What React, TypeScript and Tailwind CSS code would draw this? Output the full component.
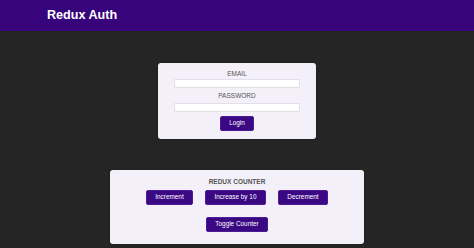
import React from "react";

const font = { fontFamily: '"Liberation Sans", Arial, sans-serif' };

const Btn: React.FC<{ children: React.ReactNode; className?: string }> = ({
  children,
  className = "",
}) => (
  <button
    className={`h-[15px] px-0 rounded-[2px] bg-[#3b0883] border border-[#4b1a94] text-white text-[6.4px] leading-none whitespace-nowrap flex items-center justify-center ${className}`}
  >
    {children}
  </button>
);

export default function App() {
  return (
    <div className="w-full h-[248px] bg-[#252525] overflow-hidden" style={font}>
      <header className="h-[31px] bg-[#37047c] flex items-center pl-[47px]">
        <h1 className="text-white font-bold text-[12.6px] leading-none">
          Redux Auth
        </h1>
      </header>

      <main className="flex flex-col items-center pt-[32px]">
        <section className="w-[158px] h-[76px] bg-[#f3f0fa] rounded-[3px] shadow-sm px-[16px] pt-[5px] flex flex-col items-center">
          <label className="h-[11px] flex items-center text-[6.5px] text-[#555]">
            EMAIL
          </label>
          <input className="w-full h-[9px] bg-white border border-[#e2deea] rounded-[1px] outline-none" />
          <label className="h-[15px] pt-[1px] flex items-center text-[6.5px] text-[#555]">
            PASSWORD
          </label>
          <input
            type="password"
            className="w-full h-[9px] bg-white border border-[#e2deea] rounded-[1px] outline-none"
          />
          <Btn className="mt-[4px] w-[34px]">Login</Btn>
        </section>

        <section className="mt-[31px] w-[254px] h-[74px] bg-[#f3f0fa] rounded-[3px] shadow-sm pt-[5px] flex flex-col items-center">
          <h2 className="h-[14px] flex items-center font-bold text-[6.5px] text-[#555]">
            REDUX COUNTER
          </h2>
          <div className="mt-[1px] flex gap-[12px]">
            <Btn className="w-[47px]">Increment</Btn>
            <Btn className="w-[61px]">Increase by 10</Btn>
            <Btn className="w-[50px]">Decrement</Btn>
          </div>
          <Btn className="mt-[12px] w-[62px]">Toggle Counter</Btn>
        </section>
      </main>
    </div>
  );
}
